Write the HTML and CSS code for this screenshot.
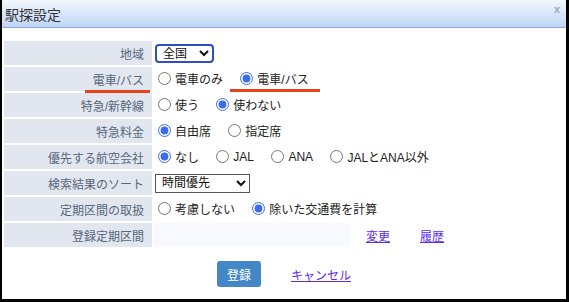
FILE: index.html
```html
<!DOCTYPE html>
<html lang="ja">
<head>
    <meta charset="UTF-8">
    <title>駅探設定</title>
    <link rel="stylesheet" href="styles.css">
</head>
<body>
    <div class="dialog">
        <!-- タイトルバー -->
        <div class="titlebar">
            <span class="title">駅探設定</span>
            <span class="close">x</span>
        </div>

        <!-- 設定テーブル -->
        <table class="settings">
            <tr>
                <th>地域</th>
                <td colspan="3">
                    <select class="sel sel-focus">
                        <option>全国</option>
                    </select>
                </td>
            </tr>
            <tr>
                <th><span class="mark mark-label">電車/バス</span></th>
                <td colspan="3">
                    <label class="opt"><input type="radio" name="mode">電車のみ</label>
                    <label class="opt mark mark-opt"><input type="radio" name="mode" checked>電車/バス</label>
                </td>
            </tr>
            <tr>
                <th>特急/新幹線</th>
                <td colspan="3">
                    <label class="opt"><input type="radio" name="exp">使う</label>
                    <label class="opt"><input type="radio" name="exp" checked>使わない</label>
                </td>
            </tr>
            <tr>
                <th>特急料金</th>
                <td colspan="3">
                    <label class="opt"><input type="radio" name="fee" checked>自由席</label>
                    <label class="opt"><input type="radio" name="fee">指定席</label>
                </td>
            </tr>
            <tr>
                <th>優先する航空会社</th>
                <td colspan="3">
                    <label class="opt"><input type="radio" name="air" checked>なし</label>
                    <label class="opt"><input type="radio" name="air">JAL</label>
                    <label class="opt"><input type="radio" name="air">ANA</label>
                    <label class="opt"><input type="radio" name="air">JALとANA以外</label>
                </td>
            </tr>
            <tr>
                <th>検索結果のソート</th>
                <td colspan="3">
                    <select class="sel sel-sort">
                        <option>時間優先</option>
                    </select>
                </td>
            </tr>
            <tr>
                <th>定期区間の取扱</th>
                <td colspan="3">
                    <label class="opt"><input type="radio" name="pass">考慮しない</label>
                    <label class="opt"><input type="radio" name="pass" checked>除いた交通費を計算</label>
                </td>
            </tr>
            <tr>
                <th>登録定期区間</th>
                <td class="pass-value"></td>
                <td class="link-cell"><a href="#">変更</a></td>
                <td class="link-cell"><a href="#">履歴</a></td>
            </tr>
        </table>

        <!-- ボタン -->
        <div class="actions">
            <button class="btn">登録</button>
            <a href="#">キャンセル</a>
        </div>
    </div>
</body>
</html>
```

FILE: styles.css
```css
/* 全体 */
html, body {
    margin: 0;
    background-color: #000;
}
body {
    font-family: "Liberation Sans", "Noto Sans CJK JP", sans-serif;
    font-size: 12px;
    color: #222;
}
.dialog {
    box-sizing: border-box;
    width: 564px;
    height: 299px;
    margin-left: 2px;
    background-color: #fff;
}

/* タイトルバー */
.titlebar {
    height: 27px;
    display: flex;
    align-items: center;
    justify-content: space-between;
    padding: 0 6px 0 3px;
    background: linear-gradient(#f3f7fe, #bed5f6);
    border-bottom: 1px solid #87a7d6;
}
.title {
    font-size: 14px;
    color: #333;
}
.close {
    font-size: 11px;
    color: #a0a8b4;
    font-weight: bold;
    margin-top: -10px;
}

/* 設定テーブル */
.settings {
    border-spacing: 2px;
    margin-top: 11px;
}
.settings th {
    width: 140px;
    height: 24px;
    padding: 0 8px 0 0;
    text-align: right;
    font-weight: normal;
    color: #56667c;
    background-color: #e2e7ef;
}
.settings td {
    height: 24px;
    padding: 0;
    white-space: nowrap;
}
.settings td.pass-value {
    width: 196px;
    background-color: #f8f8ff;
}
.settings td.link-cell {
    width: 52px;
    text-align: center;
}

/* ラジオボタン */
.opt {
    display: inline-flex;
    align-items: center;
    margin-right: 10px;
}
.opt input {
    width: 13px;
    height: 13px;
    margin: 0 4px 0 4px;
    accent-color: #3b6cf0;
}

/* セレクト */
.sel {
    font-family: inherit;
    font-size: 12px;
    height: 19px;
    padding: 0 2px;
    background-color: #fff;
    color: #111;
    margin-left: 1px;
}
.sel-focus {
    width: 59px;
    border: 2px solid #2d4ec4;
    border-radius: 4px;
}
.sel-sort {
    width: 95px;
    border: 1px solid #555;
    border-radius: 0;
}

/* 注記の下線 */
.mark {
    position: relative;
}
.mark::after {
    content: "";
    position: absolute;
    bottom: -5px;
    height: 3px;
    background-color: #e8431c;
}
.mark-label::after {
    left: -8px;
    right: -6px;
}
.mark-opt::after {
    left: -6px;
    right: -11px;
}

/* リンク */
a {
    color: #5b2cf0;
    text-decoration: underline;
}

/* ボタン */
.actions {
    display: flex;
    justify-content: center;
    align-items: center;
    gap: 30px;
    margin-top: 12px;
}
.btn {
    width: 44px;
    height: 26px;
    border: none;
    border-radius: 3px;
    background-color: #4487c7;
    color: #fff;
    font-family: inherit;
    font-size: 12px;
}
```
